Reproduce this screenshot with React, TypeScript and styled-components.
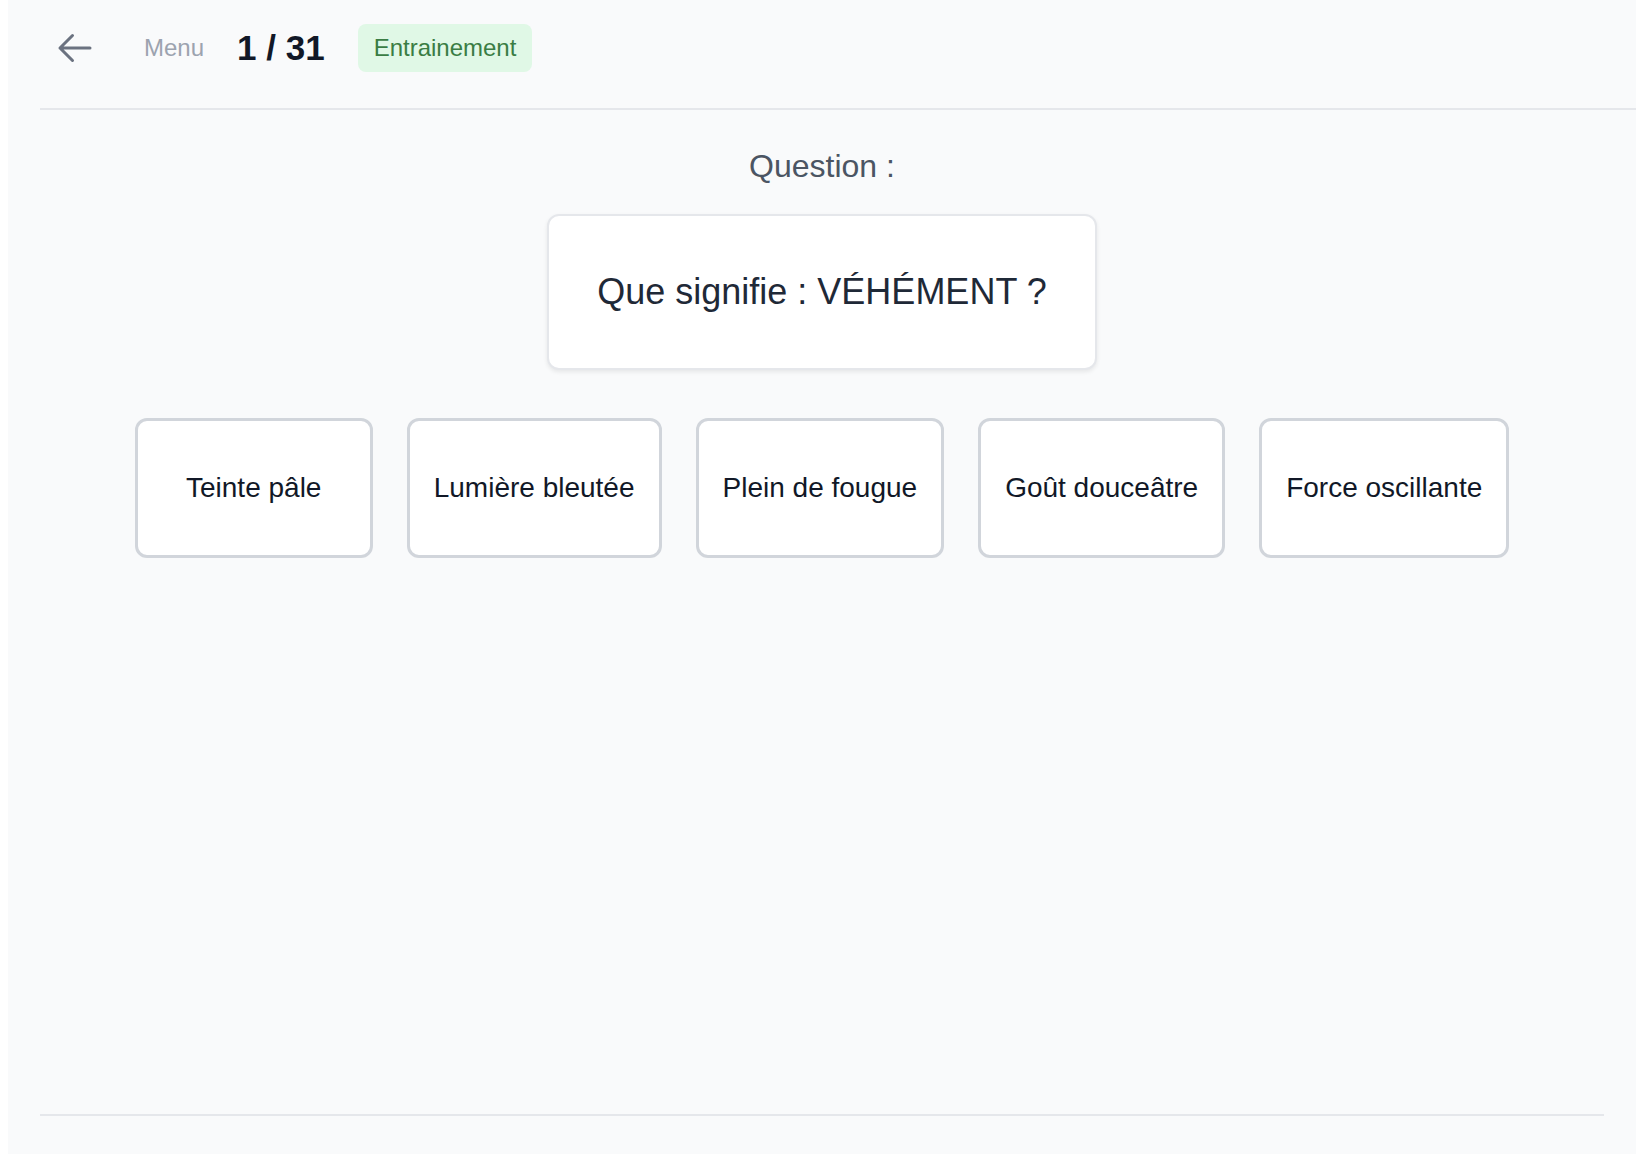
import React from "react";
import styled, { createGlobalStyle } from "styled-components";

const GlobalStyle = createGlobalStyle`
    html, body {
        margin: 0;
        padding: 0;
        background: #ffffff;
        font-family: "Liberation Sans", Arial, Helvetica, sans-serif;
    }
    * {
        box-sizing: border-box;
    }
`;

const Page = styled.div`
    margin-left: 8px;
    min-height: 100vh;
    background: #f9fafb;
    display: flex;
    flex-direction: column;
    overflow: hidden;
`;

const TopBar = styled.header`
    margin-left: 32px;
    height: 110px;
    padding: 0 0 12px 15px;
    display: flex;
    align-items: center;
    border-bottom: 2px solid #e5e7eb;
`;

const BackButton = styled.button`
    width: 40px;
    height: 40px;
    padding: 0;
    border: none;
    background: transparent;
    color: #6b7280;
    display: flex;
    align-items: center;
    justify-content: center;
    cursor: pointer;
`;

const MenuLink = styled.span`
    margin-left: 49px;
    font-size: 24px;
    color: #9ca3af;
`;

const Counter = styled.span`
    margin-left: 33px;
    font-size: 35px;
    font-weight: 700;
    color: #111827;
`;

const ModeBadge = styled.span`
    margin-left: 33px;
    padding: 8px 16px;
    height: 48px;
    display: flex;
    align-items: center;
    border-radius: 8px;
    background: #e0f8e6;
    color: #3a7d44;
    font-size: 24px;
`;

const Main = styled.main`
    flex: 1;
    display: flex;
    flex-direction: column;
    align-items: center;
    padding-top: 32px;
`;

const QuestionLabel = styled.div`
    font-size: 32px;
    line-height: 48px;
    color: #4b5563;
`;

const QuestionCard = styled.div`
    margin-top: 24px;
    height: 156px;
    padding: 0 48px;
    display: flex;
    align-items: center;
    justify-content: center;
    background: #ffffff;
    border: 2px solid #e5e7eb;
    border-radius: 12px;
    box-shadow: 0 2px 4px rgba(0, 0, 0, 0.08);
    font-size: 36px;
    color: #1f2937;
`;

const Choices = styled.div`
    margin-top: 48px;
    display: flex;
    gap: 34px;
`;

const Choice = styled.button`
    min-width: 238px;
    height: 140px;
    padding: 0 24px;
    display: flex;
    align-items: center;
    justify-content: center;
    background: #ffffff;
    border: 3px solid #d1d5db;
    border-radius: 12px;
    font-family: inherit;
    font-size: 28px;
    color: #111827;
    cursor: pointer;
`;

const Footer = styled.footer`
    margin: 0 32px;
    height: 40px;
    border-top: 2px solid #e5e7eb;
`;

const answers = [
    "Teinte pâle",
    "Lumière bleutée",
    "Plein de fougue",
    "Goût douceâtre",
    "Force oscillante",
];

function ArrowLeft() {
    return (
        <svg
            width="40"
            height="40"
            viewBox="0 0 24 24"
            fill="none"
            stroke="currentColor"
            strokeWidth={1.8}
            strokeLinecap="round"
            strokeLinejoin="round"
        >
            <path d="M10.5 19.5L3 12m0 0l7.5-7.5M3 12h18" />
        </svg>
    );
}

export default function App() {
    return (
        <>
            <GlobalStyle />
            <Page>
                <TopBar>
                    <BackButton aria-label="Retour">
                        <ArrowLeft />
                    </BackButton>
                    <MenuLink>Menu</MenuLink>
                    <Counter>1 / 31</Counter>
                    <ModeBadge>Entrainement</ModeBadge>
                </TopBar>
                <Main>
                    <QuestionLabel>Question :</QuestionLabel>
                    <QuestionCard>Que signifie : VÉHÉMENT ?</QuestionCard>
                    <Choices>
                        {answers.map((a) => (
                            <Choice key={a}>{a}</Choice>
                        ))}
                    </Choices>
                </Main>
                <Footer />
            </Page>
        </>
    );
}
